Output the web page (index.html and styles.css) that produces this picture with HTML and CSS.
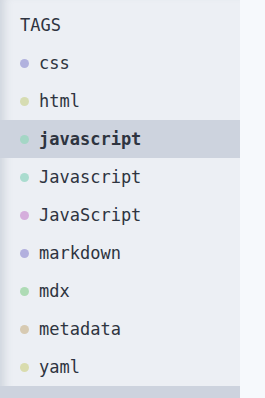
FILE: index.html
```html
<!DOCTYPE html>
<html>
<head>
<meta charset="utf-8">
<link rel="stylesheet" href="styles.css">
</head>
<body>
<div class="page">
  <aside class="sidebar">
    <h2 class="title">TAGS</h2>
    <ul class="tags">
      <li class="tag"><span class="dot c-css"></span>css</li>
      <li class="tag"><span class="dot c-html"></span>html</li>
      <li class="tag active"><span class="dot c-js1"></span>javascript</li>
      <li class="tag"><span class="dot c-js2"></span>Javascript</li>
      <li class="tag"><span class="dot c-js3"></span>JavaScript</li>
      <li class="tag"><span class="dot c-md"></span>markdown</li>
      <li class="tag"><span class="dot c-mdx"></span>mdx</li>
      <li class="tag"><span class="dot c-meta"></span>metadata</li>
      <li class="tag"><span class="dot c-yaml"></span>yaml</li>
      <li class="tag active"><span class="dot c-css"></span>&nbsp;</li>
    </ul>
  </aside>
  <main class="content"></main>
</div>
</body>
</html>
```
FILE: styles.css
```css
html, body {
  margin: 0;
  padding: 0;
  height: 100%;
  overflow: hidden;
}
body {
  background: #f6f9fc;
  font-family: "DejaVu Sans Mono", monospace;
  color: #2e3440;
}
.page {
  display: flex;
  height: 100%;
}
.sidebar {
  width: 240px;
  flex: none;
  background: #eceff4;
  box-shadow: inset 10px 0 8px -6px rgba(120, 130, 150, 0.25);
  height: 100%;
  overflow: hidden;
}
.content {
  flex: 1;
}
.title {
  margin: 0;
  padding: 14px 20px 0;
  font-size: 17px;
  font-weight: normal;
  line-height: 22px;
  height: 30px;
}
.tags {
  list-style: none;
  margin: 0;
  padding: 0;
}
.tag {
  display: flex;
  align-items: center;
  height: 38px;
  padding-left: 20px;
  font-size: 17px;
}
.tag.active {
  background: #cdd3de;
  font-weight: bold;
}
.dot {
  width: 9px;
  height: 9px;
  border-radius: 50%;
  margin-right: 10px;
  flex: none;
}
.c-css { background: #b1b2de; }
.c-html { background: #d6dcb2; }
.c-js1 { background: #a4d6c5; }
.c-js2 { background: #aadccf; }
.c-js3 { background: #d5aedc; }
.c-md { background: #b2b0de; }
.c-mdx { background: #aedbb5; }
.c-meta { background: #d7cab2; }
.c-yaml { background: #d9dcae; }
```
